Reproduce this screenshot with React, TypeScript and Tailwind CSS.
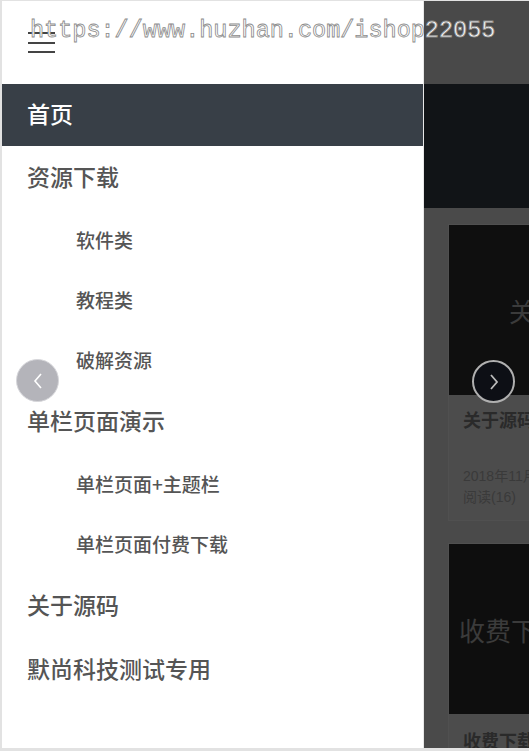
import React from 'react';

const cjk = { fontFamily: '"Noto Sans CJK SC", "Noto Sans", sans-serif' };

type NavItem = { label: string; sub?: boolean; active?: boolean };

const navItems: NavItem[] = [
  { label: '首页', active: true },
  { label: '资源下载' },
  { label: '软件类', sub: true },
  { label: '教程类', sub: true },
  { label: '破解资源', sub: true },
  { label: '单栏页面演示' },
  { label: '单栏页面+主题栏', sub: true },
  { label: '单栏页面付费下载', sub: true },
  { label: '关于源码' },
  { label: '默尚科技测试专用' },
];

function Drawer() {
  return (
    <div className="w-[422px] shrink-0 bg-white flex flex-col border-r border-[#e8e8e8]" style={cjk}>
      {/* menu toggle */}
      <div className="h-[83px] shrink-0 pl-[26px] pt-[31px]">
        <div className="flex flex-col gap-[7.5px] w-[27px]">
          <span className="h-[2px] bg-[#444]" />
          <span className="h-[2px] bg-[#444]" />
          <span className="h-[2px] bg-[#444]" />
        </div>
      </div>

      {/* menu */}
      <ul className="flex flex-col">
        {navItems.map((item) =>
          item.active ? (
            <li key={item.label} className="h-[62px] bg-[#383f47] flex items-center pl-[25px] pb-[3px] text-[23px] font-medium text-white">
              {item.label}
            </li>
          ) : item.sub ? (
            <li key={item.label} className="h-[60px] flex items-center pl-[74px] text-[19px] font-medium text-[#555]">
              {item.label}
            </li>
          ) : (
            <li key={item.label} className="h-[64px] flex items-center pl-[25px] pb-[3px] text-[23px] font-medium text-[#555]">
              {item.label}
            </li>
          )
        )}
      </ul>
    </div>
  );
}

function BackgroundPage() {
  return (
    <div className="flex-1 flex flex-col bg-[#4a4a4a] overflow-hidden" style={cjk}>
      <div className="h-[83px] shrink-0 bg-[#494949]" />
      <div className="h-[124px] shrink-0 bg-[#111417]" />
      <div className="flex flex-col gap-[22px] pl-[24px] pt-[16px]">
        {/* card 1 */}
        <div className="w-[200px] border border-[#505050] bg-[#4c4c4c]">
          <div className="h-[170px] bg-[#0f0f0f] flex items-center pl-[60px] text-[26px] text-[#3b3b3b] whitespace-nowrap">
            关于源码
          </div>
          <div className="h-[125px] px-[14px] pt-[11px] whitespace-nowrap">
            <div className="text-[18px] font-bold text-[#2a2a2a]">关于源码展示</div>
            <div className="mt-[33px] text-[14px] leading-[21px] text-[#3a3a3a]" style={{ fontFamily: '"Liberation Sans", "Noto Sans CJK SC", sans-serif' }}>
              2018年11月
              <br />
              阅读(16)
            </div>
          </div>
        </div>
        {/* card 2 */}
        <div className="w-[200px] border border-[#505050] bg-[#4c4c4c]">
          <div className="h-[170px] bg-[#0e0e0e] flex items-center pl-[10px] text-[26px] text-[#3b3b3b] whitespace-nowrap">
            收费下载
          </div>
          <div className="px-[14px] pt-[13px] text-[18px] font-bold text-[#2a2a2a] whitespace-nowrap">收费下载</div>
        </div>
      </div>
    </div>
  );
}

export default function App() {
  return (
    <div className="relative w-[529px] h-[751px] overflow-hidden bg-white border-t border-l-2 border-b-[3px] border-[#e2e2e2]">
      <div className="flex h-full">
        <Drawer />
        <BackgroundPage />
      </div>

      {/* slider arrows */}
      <div className="absolute left-[14px] top-[358px] w-[43px] h-[43px] rounded-full bg-[#b4b4ba] border border-[#d6d6da] flex items-center justify-center">
        <svg width="14" height="20" viewBox="0 0 14 20" fill="none" stroke="#fff" strokeWidth="1.6">
          <path d="M10 3 L4 10 L10 17" />
        </svg>
      </div>
      <div className="absolute left-[470px] top-[359px] w-[43px] h-[43px] rounded-full bg-[#0d0f15] border-2 border-[#b0b0b0] flex items-center justify-center">
        <svg width="14" height="20" viewBox="0 0 14 20" fill="none" stroke="#bbb" strokeWidth="1.8">
          <path d="M4 3 L10 10 L4 17" />
        </svg>
      </div>

      {/* watermark */}
      <div
        className="absolute left-[28px] top-[14px] text-[23.5px] leading-[32px] text-white whitespace-nowrap pointer-events-none"
        style={{ fontFamily: '"Liberation Mono", monospace', WebkitTextStroke: '0.8px #8a8a8a' }}
      >
        https://www.huzhan.com/ishop22055
      </div>
    </div>
  );
}
